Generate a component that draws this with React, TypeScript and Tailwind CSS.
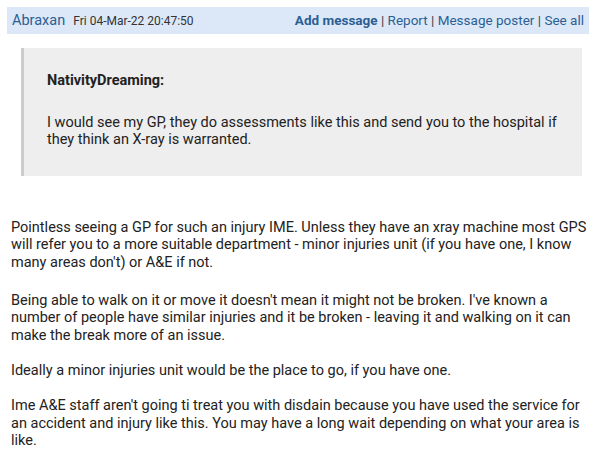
export default function App() {
  return (
    <div className="min-h-screen bg-white pl-[7px] pt-[7px] pr-[11px] text-[#222] font-['Roboto',sans-serif]">
      {/* Message header */}
      <div className="flex h-[27px] items-center justify-between bg-[#dce8f8] px-[5px]">
        <div className="flex items-baseline gap-[8px]">
          <span className="text-[14.5px] text-[#2b5f94]">Abraxan</span>
          <span className="text-[12px] text-[#333]">Fri 04-Mar-22 20:47:50</span>
        </div>
        <div className="text-[13.5px] text-[#444]">
          <a className="font-bold text-[#2b5f94]">Add message</a> |{' '}
          <a className="text-[#2b5f94]">Report</a> |{' '}
          <a className="text-[#2b5f94]">Message poster</a> |{' '}
          <a className="text-[#2b5f94]">See all</a>
        </div>
      </div>

      {/* Quoted message */}
      <div className="ml-[14px] mr-[7px] mt-[14px] border-l-[3px] border-[#cccccc] bg-[#eeeeee] pl-[23px] pr-[23px] pt-[24px] pb-[27px] text-[14.5px] leading-[17.6px]">
        <p className="font-bold">NativityDreaming:</p>
        <p className="mt-[24px]">
          I would see my GP, they do assessments like this and send you to the hospital if they think an X-ray is warranted.
        </p>
      </div>

      {/* Reply body */}
      <div className="mt-[43px] pl-[4px] text-[14.5px] leading-[17.6px]">
        <p>
          Pointless seeing a GP for such an injury IME. Unless they have an xray machine most GPS will refer you to a more suitable department - minor injuries unit (if you have one, I know many areas don't) or A&amp;E if not.
        </p>
        <p className="mt-[20px]">
          Being able to walk on it or move it doesn't mean it might not be broken. I've known a number of people have similar injuries and it be broken - leaving it and walking on it can make the break more of an issue.
        </p>
        <p className="mt-[18px]">Ideally a minor injuries unit would be the place to go, if you have one.</p>
        <p className="mt-[17px]">
          Ime A&amp;E staff aren't going ti treat you with disdain because you have used the service for an accident and injury like this. You may have a long wait depending on what your area is like.
        </p>
      </div>
    </div>
  );
}
